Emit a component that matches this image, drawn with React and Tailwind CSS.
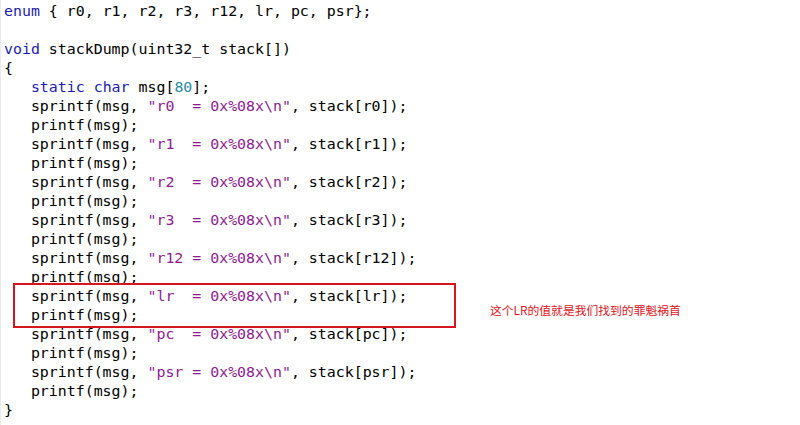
import React from "react";

const KW = "text-[#1c1cb0]";
const STR = "text-[#8b1c8f]";
const NUM = "text-[#2b8a9e]";

const regs = [
  ["r0", "r0  "],
  ["r1", "r1  "],
  ["r2", "r2  "],
  ["r3", "r3  "],
  ["r12", "r12 "],
  ["lr", "lr  "],
  ["pc", "pc  "],
  ["psr", "psr "],
];

const Line = ({ children }) => <div className="h-[19px] leading-[19px] whitespace-pre">{children}</div>;

export default function App() {
  return (
    <div className="relative w-[800px] h-[425px] bg-white overflow-hidden border-l border-[#ebebeb]">
      <div className="pl-[3px] pt-[2px] text-[14.9px] text-black font-['DejaVu_Sans_Mono','Liberation_Mono',monospace]">
        <Line>
          <span className={KW}>enum</span> {"{ r0, r1, r2, r3, r12, lr, pc, psr};"}
        </Line>
        <Line> </Line>
        <Line>
          <span className={KW}>void</span> stackDump(uint32_t stack[])
        </Line>
        <Line>{"{"}</Line>
        <Line>
          {"   "}
          <span className={KW}>static</span> <span className={KW}>char</span> msg[<span className={NUM}>80</span>];
        </Line>
        {regs.map(([name, label]) => (
          <React.Fragment key={name}>
            <Line>
              {"   sprintf(msg, "}
              <span className={STR}>{`"${label}= 0x%08x\\n"`}</span>
              {`, stack[${name}]);`}
            </Line>
            <Line>{"   printf(msg);"}</Line>
          </React.Fragment>
        ))}
        <Line>{"}"}</Line>
      </div>

      {/* annotation box */}
      <div className="absolute left-[12px] top-[283px] w-[443px] h-[45px] border-2 border-[#d8141c]" />
      <div className="absolute left-[489px] top-[302px] text-[11.8px] leading-[16px] text-[#e0141c] font-['Noto_Sans_CJK_SC',sans-serif]">
        这个LR的值就是我们找到的罪魁祸首
      </div>
    </div>
  );
}
